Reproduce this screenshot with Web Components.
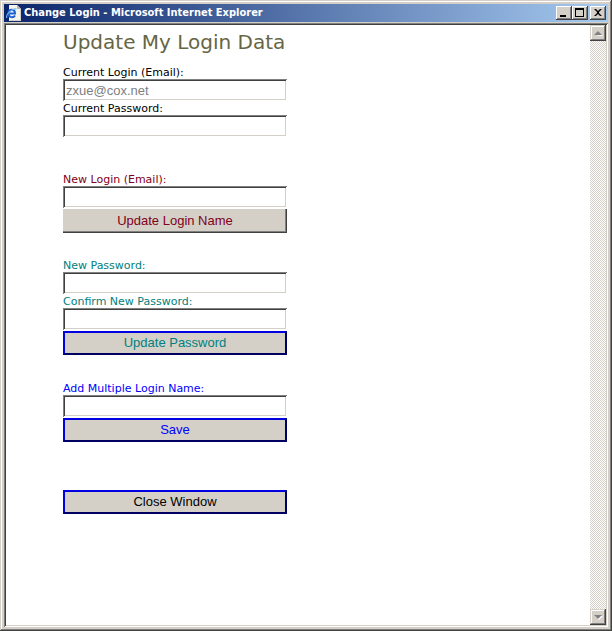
<!DOCTYPE html>
<html lang="en">
<head>
<meta charset="utf-8">
<title>Change Login</title>
<style>
  body {
    margin: 0;
    background-color: #d4d0c8;
  }
</style>
</head>
<body>
<ie-window label="Change Login - Microsoft Internet Explorer">
  <login-form></login-form>
</ie-window>

<script>
/* window frame with title bar, the page goes in the slot */
(function() {
  const template = document.createElement("template");
  template.innerHTML = `
          <style>
          :host {
              display: flex;
              flex-direction: column;
              box-sizing: border-box;
              min-height: 100vh;
              padding: 4px;
              background-color: #d4d0c8;
              box-shadow: inset -1px -1px #404040, inset 1px 1px #d4d0c8,
                inset -2px -2px #808080, inset 2px 2px #fff;
          }
          header {
              display: flex;
              align-items: center;
              height: 18px;
              margin-bottom: 1px;
              padding: 0 2px;
              background: linear-gradient(to right, #0a246a, #a6caf0);
          }
          header > svg {
              flex: none;
              margin-right: 2px;
          }
          h1 {
              flex: 1;
              margin: 0;
              color: #fff;
              font: bold 11px/18px "DejaVu Sans Condensed", Tahoma, sans-serif;
              white-space: nowrap;
          }
          .tools {
              display: flex;
          }
          .tools button {
              width: 16px;
              height: 14px;
              padding: 0;
              border: none;
              background-color: #d4d0c8;
              box-shadow: inset -1px -1px #404040, inset 1px 1px #fff, inset -2px -2px #808080;
          }
          .tools button:last-child {
              margin-left: 2px;
          }
          .tools svg {
              display: block;
          }
          .view {
              display: flex;
              flex: 1;
              padding: 2px;
              background-color: #fff;
              box-shadow: inset 1px 1px #808080, inset -1px -1px #fff,
                inset 2px 2px #404040, inset -2px -2px #d4d0c8;
          }
          main {
              flex: 1;
              min-width: 0;
          }
          </style>
          <header>
            <svg width="16" height="16" viewBox="0 0 16 16" aria-hidden="true">
              <path d="M3 0h8l4 4v12H3z" fill="#f4f4ee"/>
              <path d="M11 0v4h4z" fill="#b8b8b0"/>
              <path d="M14.500 4v11.500H4" fill="none" stroke="#d0d0c8"/>
              <path d="M2.500 8.500h6.500c0-5-6.500-5-6.500 0 0 4.500 5 4.500 6.500 2" fill="none" stroke="#1b5fd0" stroke-width="2"/>
              <path d="M1 13C-1 10 6 3.500 10.500 4" fill="none" stroke="#6fb4f4" stroke-width="1.200"/>
            </svg>
            <h1></h1>
            <div class="tools">
              <button type="button" aria-label="Minimize"><svg width="16" height="14"><path d="M4 9h6v2H4z"/></svg></button>
              <button type="button" aria-label="Maximize"><svg width="16" height="14"><path d="M3 2h9v9H3zM4 4v6h7V4z" fill-rule="evenodd"/></svg></button>
              <button type="button" aria-label="Close"><svg width="16" height="14"><path d="M4 3h2l2 2 2-2h2L9 6v1l3 3h-2L8 8l-2 2H4l3-3V6z"/></svg></button>
            </div>
          </header>
          <div class="view">
            <main><slot></slot></main>
            <ie-scrollbar></ie-scrollbar>
          </div>
      `;

  class IEWindow extends HTMLElement {
    constructor() {
      super();
      this._root = this.attachShadow({ mode: "open" });
      this._root.appendChild(template.content.cloneNode(true));
    }

    static get observedAttributes() {
      return ["label"];
    }

    attributeChangedCallback(name, oldValue, newValue) {
      this._root.querySelector("h1").textContent = newValue;
    }
  }

  window.customElements.define("ie-window", IEWindow);
})();

/* disabled scrollbar, nothing to scroll */
(function() {
  const template = document.createElement("template");
  template.innerHTML = `
          <style>
          :host {
              display: flex;
              flex-direction: column;
              justify-content: space-between;
              width: 16px;
              background: repeating-conic-gradient(#d4d0c8 0 25%, #fff 0 50%) 0 0 / 2px 2px;
          }
          button {
              width: 16px;
              height: 16px;
              padding: 0;
              border: none;
              background-color: #d4d0c8;
              box-shadow: inset -1px -1px #404040, inset 1px 1px #d4d0c8,
                inset -2px -2px #808080, inset 2px 2px #fff;
          }
          svg {
              display: block;
          }
          </style>
          <button type="button" disabled aria-label="Scroll up"><svg width="16" height="16"><path d="M5 11h8l-1-1" fill="#fff"/><path d="M4 10h8L8 6z" fill="#808080"/></svg></button>
          <button type="button" disabled aria-label="Scroll down"><svg width="16" height="16"><path d="M5 7h8L9 11z" fill="#fff"/><path d="M4 6h8l-4 4z" fill="#808080"/></svg></button>
      `;

  class IEScrollbar extends HTMLElement {
    constructor() {
      super();
      this._root = this.attachShadow({ mode: "open" });
      this._root.appendChild(template.content.cloneNode(true));
    }
  }

  window.customElements.define("ie-scrollbar", IEScrollbar);
})();

/* label above a text box
 *
 * label    text shown above the box
 * type     input type, default is "text"
 * value    initial value
 * disabled greys out the value
 */
(function() {
  const template = document.createElement("template");
  template.innerHTML = `
          <style>
          :host {
              display: block;
          }
          label {
              display: block;
              padding-top: 2px;
              font: 11px/12px "DejaVu Sans", Verdana, sans-serif;
          }
          input {
              display: block;
              box-sizing: border-box;
              width: 100%;
              height: 22px;
              padding: 2px 3px;
              border: none;
              background-color: #fff;
              box-shadow: inset 1px 1px #808080, inset -1px -1px #fff,
                inset 2px 2px #404040, inset -2px -2px #d4d0c8;
              color: #000;
              font: 13px "Liberation Sans", Arial, sans-serif;
          }
          input:disabled {
              color: #808080;
          }
          </style>
          <label for="field"></label>
          <input id="field" type="text">
      `;

  class LoginField extends HTMLElement {
    constructor() {
      super();
      this._root = this.attachShadow({ mode: "open" });
      this._root.appendChild(template.content.cloneNode(true));
    }

    static get observedAttributes() {
      return ["label", "type", "value", "disabled"];
    }

    get value() {
      return this._root.querySelector("input").value;
    }

    attributeChangedCallback(name, oldValue, newValue) {
      let lbl = this._root.querySelector("label");
      let input = this._root.querySelector("input");
      if (name === "label") {
        lbl.textContent = newValue;
      }
      if (name === "type") {
        input.type = newValue;
      }
      if (name === "value") {
        input.value = newValue;
      }
      if (name === "disabled") {
        input.disabled = newValue !== null;
      }
    }
  }

  window.customElements.define("login-field", LoginField);
})();

/* wide button, add the "framed" attribute for a blue outset border */
(function() {
  const template = document.createElement("template");
  template.innerHTML = `
          <style>
          :host {
              display: block;
              margin-top: 1px;
          }
          button {
              display: block;
              box-sizing: border-box;
              width: 100%;
              height: 24px;
              padding: 0 0 2px;
              border: none;
              background-color: #d4d0c8;
              box-shadow: inset -1px -1px #404040, inset -2px -2px #808080;
              color: inherit;
              font: 13px "Liberation Sans", Arial, sans-serif;
          }
          :host([framed]) button {
              border: 2px solid;
              border-color: #0000e0 #000060 #000060 #0000e0;
              box-shadow: none;
          }
          </style>
          <button type="button"><slot></slot></button>
      `;

  class LoginButton extends HTMLElement {
    constructor() {
      super();
      this._root = this.attachShadow({ mode: "open" });
      this._root.appendChild(template.content.cloneNode(true));
    }
  }

  window.customElements.define("login-button", LoginButton);
})();

/* the form itself */
(function() {
  const template = document.createElement("template");
  template.innerHTML = `
          <style>
          :host {
              display: block;
              padding: 4px 16px 16px 57px;
          }
          form {
              max-width: 224px;
          }
          h2 {
              margin: 0 0 10px;
              color: #666644;
              font: 20px/26px "DejaVu Sans", Verdana, sans-serif;
              white-space: nowrap;
          }
          .current {
              margin-bottom: 35px;
          }
          .name {
              margin-bottom: 25px;
              color: #800020;
          }
          .password {
              margin-bottom: 26px;
              color: #008080;
          }
          .add {
              margin-bottom: 48px;
              color: #0000ff;
          }
          </style>
          <form>
            <h2>Update My Login Data</h2>
            <section class="current">
              <login-field label="Current Login (Email):" value="zxue@cox.net" disabled></login-field>
              <login-field label="Current Password:" type="password"></login-field>
            </section>
            <section class="name">
              <login-field label="New Login (Email):"></login-field>
              <login-button>Update Login Name</login-button>
            </section>
            <section class="password">
              <login-field label="New Password:" type="password"></login-field>
              <login-field label="Confirm New Password:" type="password"></login-field>
              <login-button framed>Update Password</login-button>
            </section>
            <section class="add">
              <login-field label="Add Multiple Login Name:"></login-field>
              <login-button framed>Save</login-button>
            </section>
            <login-button framed>Close Window</login-button>
          </form>
      `;

  class LoginForm extends HTMLElement {
    constructor() {
      super();
      this._root = this.attachShadow({ mode: "open" });
      this._root.appendChild(template.content.cloneNode(true));
    }
  }

  window.customElements.define("login-form", LoginForm);
})();
</script>
</body>
</html>
